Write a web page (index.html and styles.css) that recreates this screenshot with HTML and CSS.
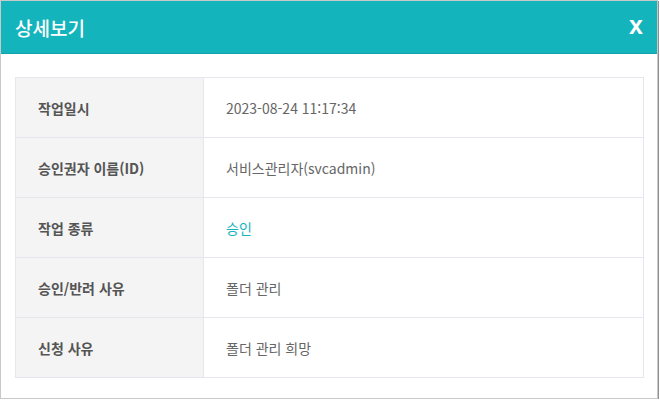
FILE: index.html
```html
<!DOCTYPE html>
<html lang="ko">
<head>
    <meta charset="UTF-8">
    <meta name="viewport" content="width=device-width, initial-scale=1.0">
    <title>상세보기</title>
    <link rel="stylesheet" href="styles.css">
</head>
<body>
    <div class="modal">
        <div class="modal-header">
            <h1>상세보기</h1>
            <button class="close" type="button">x</button>
        </div>
        <div class="modal-body">
            <table class="detail">
                <tr>
                    <th>작업일시</th>
                    <td>2023-08-24 11:17:34</td>
                </tr>
                <tr>
                    <th>승인권자 이름(ID)</th>
                    <td>서비스관리자(svcadmin)</td>
                </tr>
                <tr>
                    <th>작업 종류</th>
                    <td class="status">승인</td>
                </tr>
                <tr>
                    <th>승인/반려 사유</th>
                    <td>폴더 관리</td>
                </tr>
                <tr>
                    <th>신청 사유</th>
                    <td>폴더 관리 희망</td>
                </tr>
            </table>
        </div>
    </div>
</body>
</html>
```

FILE: styles.css
```css
body {
    margin: 0;
    padding: 0;
    background-color: #fff;
    font-family: "Noto Sans CJK KR", "Noto Sans", sans-serif;
}
.modal {
    width: 656px;
    height: 397px;
    background-color: #fff;
    border: 1px solid #c9c9c9;
    box-shadow: 1px 1px 0 #8f8f8f;
}
.modal-header {
    height: 52px;
    background-color: #14b4bc;
    border-bottom: 1px solid #11a3aa;
    display: flex;
    align-items: center;
    justify-content: space-between;
    padding: 0 14px 0 14px;
}
.modal-header h1 {
    margin: 0;
    color: #fff;
    font-size: 19px;
    font-weight: 500;
}
.close {
    background: none;
    border: none;
    color: #fff;
    font-family: "Liberation Sans", Arial, sans-serif;
    font-size: 25px;
    font-weight: bold;
    line-height: 1;
    padding: 0 0 4px 0;
    cursor: pointer;
}
.modal-body {
    padding: 23px 14px 0 14px;
}
.detail {
    width: 629px;
    border-collapse: collapse;
    font-size: 14px;
}
.detail th,
.detail td {
    height: 59px;
    border: 1px solid #e6e6ec;
    text-align: left;
    padding: 0 0 0 22px;
}
.detail th {
    width: 165px;
    background-color: #f4f4f4;
    color: #555;
    font-weight: bold;
}
.detail td {
    color: #666;
    font-weight: normal;
}
.detail .status {
    color: #14b4bc;
}
```
